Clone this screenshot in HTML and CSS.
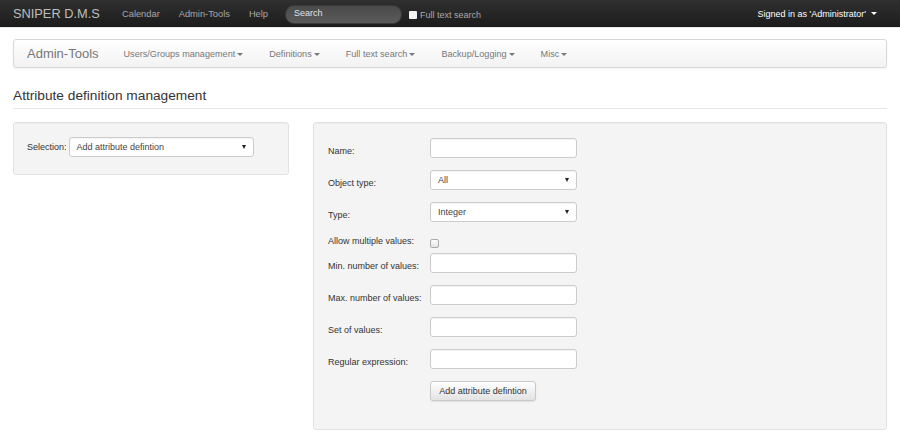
FILE: index.html
```html
<!DOCTYPE html>
<html lang="en">
<head>
<meta charset="utf-8">
<title>SNIPER D.M.S - Admin-Tools</title>
<link rel="stylesheet" href="styles.css">
</head>
<body>
<header class="topbar">
  <a class="brand" href="#">SNIPER D.M.S</a>
  <nav class="topnav">
    <a href="#">Calendar</a>
    <a href="#">Admin-Tools</a>
    <a href="#">Help</a>
  </nav>
  <form class="search">
    <input class="search-input" type="text" placeholder="Search">
    <label class="fulltext"><span class="cb-white"></span>Full text search</label>
  </form>
  <div class="user">Signed in as 'Administrator' <span class="caret caret-white"></span></div>
</header>

<div class="container">
  <nav class="subnav">
    <span class="subnav-brand">Admin-Tools</span>
    <a href="#">Users/Groups management<span class="caret"></span></a>
    <a href="#">Definitions<span class="caret"></span></a>
    <a href="#">Full text search<span class="caret"></span></a>
    <a href="#">Backup/Logging<span class="caret"></span></a>
    <a href="#">Misc<span class="caret"></span></a>
  </nav>

  <h1 class="page-title">Attribute definition management</h1>

  <div class="content">
    <div class="well well-left">
      <div class="sel-row">
        <span class="lbl">Selection:</span>
        <div class="select select-wide">Add attribute defintion<span class="sel-caret"></span></div>
      </div>
    </div>

    <div class="well well-right">
      <div class="frow"><span class="flabel">Name:</span><div class="input"></div></div>
      <div class="frow"><span class="flabel">Object type:</span><div class="select">All<span class="sel-caret"></span></div></div>
      <div class="frow"><span class="flabel">Type:</span><div class="select">Integer<span class="sel-caret"></span></div></div>
      <div class="frow frow-check"><span class="flabel">Allow multiple values:</span><span class="cb"></span></div>
      <div class="frow"><span class="flabel">Min. number of values:</span><div class="input"></div></div>
      <div class="frow"><span class="flabel">Max. number of values:</span><div class="input"></div></div>
      <div class="frow"><span class="flabel">Set of values:</span><div class="input"></div></div>
      <div class="frow"><span class="flabel">Regular expression:</span><div class="input"></div></div>
      <div class="frow frow-last"><span class="flabel"></span><button class="btn" type="button">Add attribute defintion</button></div>
    </div>
  </div>
</div>
</body>
</html>
```

FILE: styles.css
```css
* { box-sizing: border-box; }
html, body { margin: 0; padding: 0; background: #fff; }
body { font-family: "Liberation Sans", Arial, sans-serif; color: #333; font-size: 9px; }
a { text-decoration: none; }

.topbar {
  height: 28px;
  background: linear-gradient(to bottom, #303030 0%, #1c1c1c 100%);
  border-bottom: 1px solid #e8e8e8;
  display: flex;
  align-items: center;
  padding: 0 0 0 13px;
}
.brand { color: #bdbdbd; font-size: 12.8px; line-height: 27px; width: 109px; }
.topnav { display: flex; }
.topnav a { color: #a8a8a8; font-size: 9.3px; margin-right: 19px; }
.topnav a:last-child { margin-right: 17px; }
.search { display: flex; align-items: center; }
.search-input {
  width: 117px; height: 19px;
  border: 1px solid #3a3a3a;
  border-radius: 9px;
  background: linear-gradient(to bottom, #4a4a4a, #5a5a5a);
  color: #eee;
  padding: 0 0 3px 8px;
  font-family: "Liberation Sans", Arial, sans-serif;
  font-size: 9px;
  outline: none;
  margin-top: 1px;
}
.search-input::placeholder { color: #e2e2e2; }
.fulltext { display: flex; align-items: center; color: #a8a8a8; font-size: 9px; margin-left: 7px; margin-top: 2px; }
.cb-white { width: 8px; height: 8px; background: #f4f4f4; border-radius: 1px; margin-right: 3px; }
.user { margin-left: auto; margin-right: 23px; color: #fff; font-size: 9px; display: flex; align-items: center; gap: 3px; }

.caret {
  display: inline-block;
  width: 0; height: 0;
  border-left: 3px solid transparent;
  border-right: 3px solid transparent;
  border-top: 3px solid #777;
  vertical-align: middle;
  margin-left: 2px;
}
.caret-white { border-top-color: #fff; }

.container { padding: 0 13px; }

.subnav {
  margin-top: 11px;
  height: 29px;
  border: 1px solid #d8d8d8;
  border-radius: 3px;
  background: linear-gradient(to bottom, #ffffff 0%, #f2f2f2 100%);
  box-shadow: 0 1px 2px rgba(0,0,0,.06);
  display: flex;
  align-items: center;
  padding-left: 13px;
}
.subnav-brand { color: #777; font-size: 13px; margin-right: 12px; }
.subnav a { color: #777; font-size: 9.1px; padding: 0 13px; }

.page-title {
  margin: 20px 0 13px;
  font-size: 13.7px;
  font-weight: normal;
  line-height: 16px;
  padding-bottom: 4px;
  border-bottom: 1px solid #e6e6e6;
  color: #333;
}

.content { display: flex; align-items: flex-start; gap: 24px; }
.well {
  background: #f4f4f4;
  border: 1px solid #e2e2e2;
  border-radius: 3px;
  box-shadow: inset 0 1px 1px rgba(0,0,0,.03);
}
.well-left { width: 276px; flex: none; height: 53px; padding: 14px 13px; }
.well-right { flex: 1; padding: 15px 14px 28px; }

.sel-row { display: flex; align-items: center; }
.lbl { margin-right: 2px; }

.select, .input {
  width: 147px;
  height: 20px;
  background: #fff;
  border: 1px solid #ccc;
  border-radius: 3px;
  box-shadow: inset 0 1px 1px rgba(0,0,0,.05);
  position: relative;
  line-height: 18px;
  padding-left: 7px;
  color: #444;
}
.select-wide { width: 185px; padding-left: 7px; }
.sel-caret {
  position: absolute;
  right: 7px; top: 7px;
  width: 0; height: 0;
  border-left: 2px solid transparent;
  border-right: 2px solid transparent;
  border-top: 4px solid #222;
}

.frow { display: flex; align-items: flex-start; margin-bottom: 12px; }
.frow-last { margin-bottom: 0; }
.flabel { width: 102px; flex: none; line-height: 14px; padding-top: 6px; }
.frow-check { margin-bottom: 5px; }
.frow-check .flabel { padding-top: 0; }
.cb {
  width: 9px; height: 9px;
  margin-top: 5px;
  border: 1px solid #aaa;
  border-radius: 2px;
  background: linear-gradient(to bottom, #fdfdfd, #e4e4e4);
}
.btn {
  height: 20px;
  width: 106px;
  padding: 0;
  border: 1px solid #c8c8c8;
  border-radius: 3px;
  background: linear-gradient(to bottom, #ffffff 0%, #e3e3e3 100%);
  box-shadow: 0 1px 1px rgba(0,0,0,.08);
  font-family: "Liberation Sans", Arial, sans-serif;
  font-size: 9px;
  color: #333;
  margin: 0;
}
```
